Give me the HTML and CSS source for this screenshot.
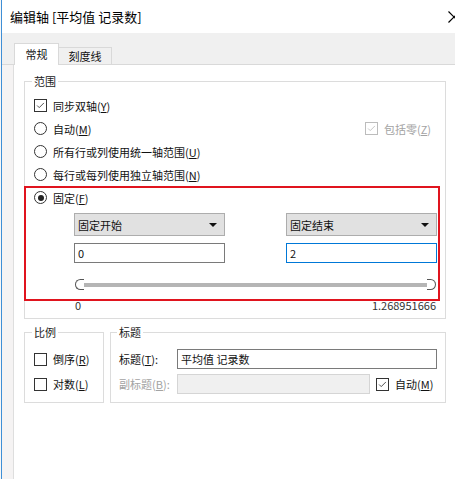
FILE: index.html
```html
<!DOCTYPE html>
<html lang="zh-CN">
<head>
    <meta charset="UTF-8">
    <title>编辑轴</title>
    <link rel="stylesheet" href="styles.css">
</head>
<body>
    <div class="window">
        <div class="titlebar">
            <span class="title">编辑轴 [平均值 记录数]</span>
            <svg class="close" width="12" height="12" viewBox="0 0 12 12">
                <path d="M0.5 0.5 L11.5 11.5 M11.5 0.5 L0.5 11.5" stroke="#000" stroke-width="1.2" fill="none"/>
            </svg>
        </div>

        <div class="tabbar">
            <div class="tab active">常规</div>
            <div class="tab">刻度线</div>
        </div>

        <div class="main">
            <div class="side"></div>
            <div class="panel">
                <fieldset class="group range">
                    <legend>范围</legend>
                    <div class="row"><span class="check on"><svg viewBox="0 0 13 13"><polyline points="2.5,6.5 5,9 10.5,3.5"/></svg></span>同步双轴(<u>Y</u>)</div>
                    <div class="row split">
                        <span class="opt"><span class="radio"></span>自动(<u>M</u>)</span>
                        <span class="opt disabled"><span class="check on"><svg viewBox="0 0 13 13"><polyline points="2.5,6.5 5,9 10.5,3.5"/></svg></span>包括零(<u>Z</u>)</span>
                    </div>
                    <div class="row"><span class="radio"></span>所有行或列使用统一轴范围(<u>U</u>)</div>
                    <div class="row"><span class="radio"></span>每行或每列使用独立轴范围(<u>N</u>)</div>

                    <div class="fixed">
                        <div class="row"><span class="radio on"></span>固定(<u>F</u>)</div>
                        <div class="cols">
                            <div class="col">
                                <div class="select">固定开始<span class="arrow"></span></div>
                                <div class="input">0</div>
                            </div>
                            <div class="col">
                                <div class="select">固定结束<span class="arrow"></span></div>
                                <div class="input focus">2</div>
                            </div>
                        </div>
                        <div class="slider">
                            <span class="thumb left"></span>
                            <span class="track"></span>
                            <span class="thumb right"></span>
                        </div>
                        <div class="ticks"><span>0</span><span>1.268951666</span></div>
                        <div class="highlight"></div>
                    </div>
                </fieldset>

                <div class="bottom">
                    <fieldset class="group scale">
                        <legend>比例</legend>
                        <div class="line"><span class="check"></span>倒序(<u>R</u>)</div>
                        <div class="line"><span class="check"></span>对数(<u>L</u>)</div>
                    </fieldset>
                    <fieldset class="group caption">
                        <legend>标题</legend>
                        <div class="line">
                            <span class="label">标题(<u>T</u>):</span>
                            <div class="input wide">平均值 记录数</div>
                        </div>
                        <div class="line">
                            <span class="label disabled">副标题(<u>B</u>):</span>
                            <div class="input off"></div>
                            <span class="check on"><svg viewBox="0 0 13 13"><polyline points="2.5,6.5 5,9 10.5,3.5"/></svg></span>
                            <span>自动(<u>M</u>)</span>
                        </div>
                    </fieldset>
                </div>
            </div>
        </div>
    </div>
</body>
</html>
```

FILE: styles.css
```css
body {
    margin: 0;
    width: 455px;
    height: 479px;
    overflow: hidden;
    background: #f7f7f7;
    font-family: "Noto Sans CJK SC", "Noto Sans", sans-serif;
    font-size: 11px;
    color: #111;
}
u {
    text-decoration: underline;
    text-underline-offset: 1px;
}
.window {
    margin-left: 1px;
    border-left: 1px solid #3f8fd6;
    height: 479px;
    display: flex;
    flex-direction: column;
}
.titlebar {
    height: 33px;
    background: white;
    display: flex;
    align-items: center;
    padding-left: 8px;
}
.title {
    font-size: 13px;
    color: #000;
}
.close {
    margin-left: auto;
    margin-right: -5px;
    margin-top: 1px;
    flex: none;
}
.tabbar {
    height: 31px;
    background: #f0f0f0;
    border-bottom: 1px solid #d9d9d9;
    display: flex;
    align-items: flex-end;
    padding-left: 12px;
}
.tab {
    height: 16px;
    width: 52px;
    border: 1px solid #d9d9d9;
    border-bottom: none;
    border-left: none;
    display: flex;
    align-items: center;
    justify-content: center;
    background: #f0f0f0;
}
.tab.active {
    width: 45px;
    height: 22px;
    border-left: 1px solid #d9d9d9;
    background: white;
    margin-bottom: -1px;
    padding-bottom: 1px;
    box-sizing: border-box;
}
.main {
    flex: 1;
    display: flex;
}
.side {
    width: 11px;
    background: #f5f3f3;
    border-right: 1px solid #dedede;
}
.panel {
    flex: 1;
    background: white;
    padding: 9px 9px 0 10px;
}

/* group boxes */
.group {
    margin: 0;
    border: 1px solid #dcdcdc;
    min-width: 0;
}
.group legend {
    padding: 0 2px;
    margin-left: -2px;
    line-height: 14px;
    color: #222;
}
.range {
    padding: 6px 0 6px 9px;
    width: 422px;
    box-sizing: border-box;
}
.row {
    height: 23px;
    display: flex;
    align-items: center;
}
.split {
    justify-content: space-between;
    padding-right: 14px;
}
.opt {
    display: flex;
    align-items: center;
}
.disabled {
    color: #a3a3a3;
}

.check, .radio {
    width: 13px;
    height: 13px;
    box-sizing: border-box;
    border: 1px solid #333;
    background: white;
    margin-right: 6px;
    flex: none;
    display: inline-flex;
    align-items: center;
    justify-content: center;
}
.check svg {
    width: 11px;
    height: 11px;
}
.check polyline {
    fill: none;
    stroke: #333;
    stroke-width: 1;
}
.disabled .check {
    border-color: #bcbcbc;
}
.disabled .check polyline {
    stroke: #bcbcbc;
}
.radio {
    border-radius: 50%;
}
.radio.on::after {
    content: "";
    width: 6px;
    height: 6px;
    border-radius: 50%;
    background: #222;
}

/* fixed range block */
.fixed {
    position: relative;
}
.cols {
    display: grid;
    grid-template-columns: 151px 151px;
    column-gap: 61px;
    padding-left: 40px;
    margin-top: 4px;
}
.col {
    display: flex;
    flex-direction: column;
    gap: 7px;
}
.select {
    height: 23px;
    box-sizing: border-box;
    background: #e1e1e1;
    border: 1px solid #adadad;
    display: flex;
    align-items: center;
    padding: 0 7px 0 3px;
}
.arrow {
    margin-left: auto;
    width: 0;
    height: 0;
    border-left: 4px solid transparent;
    border-right: 4px solid transparent;
    border-top: 4px solid #111;
}
.input {
    height: 20px;
    box-sizing: border-box;
    border: 1px solid #7a7a7a;
    background: white;
    display: flex;
    align-items: center;
    padding-left: 3px;
}
.input.focus {
    border-color: #0078d7;
}
.slider {
    margin: 16px 0 0 41px;
    width: 361px;
    height: 11px;
    display: flex;
    align-items: center;
}
.track {
    flex: 1;
    height: 4px;
    background: #b5b5b5;
}
.thumb {
    width: 9px;
    height: 11px;
    box-sizing: border-box;
    border: 1px solid #555;
    background: white;
    flex: none;
}
.thumb.left {
    border-radius: 6px 0 0 6px;
    border-right: none;
}
.thumb.right {
    border-radius: 0 6px 6px 0;
    border-left: none;
}
.ticks {
    margin: 8px 0 0 41px;
    width: 361px;
    height: 14px;
    line-height: 14px;
    display: flex;
    justify-content: space-between;
    color: #333;
}
.highlight {
    position: absolute;
    left: -10px;
    top: 0;
    width: 416px;
    height: 115px;
    box-sizing: border-box;
    border: 2px solid #e0141e;
    pointer-events: none;
}

/* lower group boxes */
.bottom {
    display: flex;
    gap: 6px;
    margin-top: 6px;
    width: 422px;
}
.scale {
    width: 80px;
    box-sizing: border-box;
    padding: 10px 0 8px 9px;
}
.caption {
    flex: 1;
    padding: 10px 8px 8px 8px;
}
.line {
    height: 20px;
    display: flex;
    align-items: center;
}
.line + .line {
    margin-top: 5px;
}
.label {
    width: 58px;
    flex: none;
}
.input.wide {
    flex: 1;
}
.input.off {
    width: 193px;
    background: #f0f0f0;
    border-color: #d5d5d5;
    margin-right: 6px;
}
```
